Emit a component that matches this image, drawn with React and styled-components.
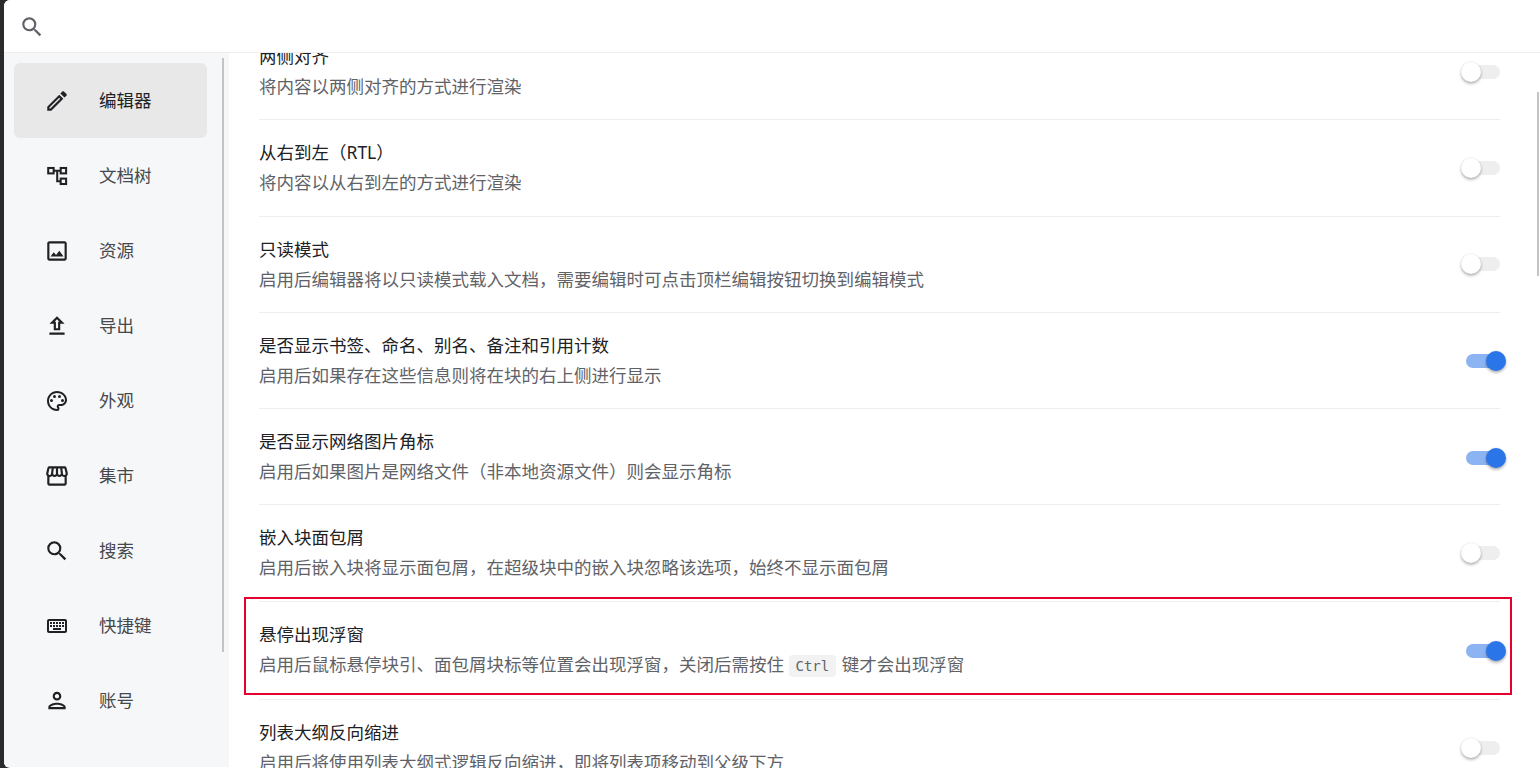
import styled, { createGlobalStyle } from "styled-components";
import {
  MdOutlineEdit,
  MdSearch,
  MdOutlineImage,
  MdOutlinePalette,
  MdOutlineStorefront,
  MdOutlineKeyboard,
  MdOutlinePerson,
  MdOutlineInfo,
} from "react-icons/md";

const Global = createGlobalStyle`
  html, body { margin: 0; height: 100%; background: #2b2b2b; overflow: hidden; }
  body { font-family: "Noto Sans", "Noto Sans CJK SC", sans-serif; }
  #root { height: 100%; }
`;

const Window = styled.div`
  height: 768px;
  margin-left: 4px;
  background: #fff;
  border-radius: 6px 0 0 6px;
  display: flex;
  flex-direction: column;
  overflow: hidden;
`;

const SearchBar = styled.div`
  flex: none;
  height: 50px;
  padding: 2px 0 0 15px;
  border-bottom: 1px solid #eeeeee;
  display: flex;
  align-items: center;
  color: #5f6368;
  background: #fff;
  position: relative;
  z-index: 1;
`;

const Body = styled.div`
  flex: 1;
  display: flex;
  min-height: 0;
`;

const Side = styled.nav`
  width: 225px;
  flex: none;
  background: #f6f7f8;
  padding: 10px 22px 0 10px;
  margin-bottom: 1px;
  box-sizing: border-box;
  display: flex;
  flex-direction: column;
  position: relative;
  overflow: hidden;
`;

const SideThumb = styled.div`
  position: absolute;
  right: 5px;
  top: 5px;
  width: 2px;
  height: 594px;
  background: #c4c4c4;
`;

const NavItem = styled.div`
  flex: none;
  height: 75px;
  width: 193px;
  display: flex;
  align-items: center;
  box-sizing: border-box;
  padding-left: 30px;
  border-radius: 6px;
  font-size: 17.5px;
  color: ${(p) => (p.$active ? "#202124" : "#45484c")};
  background: ${(p) => (p.$active ? "#e8e8e8" : "transparent")};
`;

const NavIcon = styled.span`
  flex: none;
  width: 26px;
  height: 26px;
  display: flex;
  align-items: center;
  justify-content: center;
  color: #202124;
`;

const NavLabel = styled.span`
  margin: -2px 0 0 29px;
`;

const TreeIcon = () => (
  <svg width="26" height="26" viewBox="0 0 24 24" fill="none" stroke="currentColor" strokeWidth="1.9">
    <rect x="3.9" y="4.6" width="5" height="5" />
    <rect x="15.4" y="4.6" width="5" height="5" />
    <rect x="15.4" y="14.4" width="5" height="5" />
    <path d="M8.9 7.1h6.5M12.2 7.1v9.8h3.2" />
  </svg>
);

const UploadIcon = () => (
  <svg width="26" height="26" viewBox="0 0 24 24" fill="currentColor">
    <path d="M9 16h6v-6h4l-7-7-7 7h4v6zm3-10.17L14.17 8H13v6h-2V8H9.83L12 5.83zM5 18h14v2H5z" />
  </svg>
);

const Main = styled.main`
  flex: 1;
  min-width: 0;
  overflow: hidden;
  position: relative;
`;

const MainThumb = styled.div`
  position: absolute;
  right: 1px;
  top: 39px;
  width: 2px;
  height: 184px;
  background: #c4c4c4;
`;

const List = styled.div`
  width: 1241px;
  margin: -28.9px 0 0 30px;
`;

const Row = styled.div`
  height: ${(p) => (p.$tall ? "98px" : "96.25px")};
  box-sizing: border-box;
  border-bottom: 1px solid #eeeeee;
  padding-top: 19px;
  position: relative;
  display: flex;
  align-items: center;
  justify-content: space-between;
  &:last-child { border-bottom: 0; }
`;

const RowText = styled.div`
  align-self: flex-start;
`;

const Title = styled.div`
  font-size: 17.5px;
  line-height: 26px;
  color: #202124;
  margin-bottom: 4px;
`;

const Desc = styled.div`
  font-size: 17.5px;
  line-height: 26px;
  color: #5f6368;
  white-space: nowrap;
`;

const Code = styled.code`
  font-family: "DejaVu Sans Mono", monospace;
  font-size: 14px;
  background: #f2f2f2;
  color: #5f6368;
  border-radius: 4px;
  padding: 3px 6.5px;
  margin: 0 6px 0 5px;
`;

const Switch = styled.span`
  width: 34px;
  height: 14px;
  flex: none;
  border-radius: 7px;
  position: relative;
  background: ${(p) => (p.$on ? "#8cb3f2" : "#eeeeee")};
  margin-top: ${(p) => (p.$on ? "-17px" : "-19px")};
  &::after {
    content: "";
    position: absolute;
    top: -3px;
    left: ${(p) => (p.$on ? "20px" : "-5px")};
    width: 20px;
    height: 20px;
    border-radius: 50%;
    background: ${(p) => (p.$on ? "#2a75e8" : "#fff")};
    box-shadow: 0 2px 3px rgba(0, 0, 0, 0.28), 0 0 2px rgba(0, 0, 0, 0.12);
  }
`;

const Highlight = styled.div`
  position: absolute;
  left: -15px;
  right: -12px;
  top: -4.6px;
  bottom: 3.6px;
  border: 2px solid #e6002d;
  pointer-events: none;
`;

const navs = [
  [<MdOutlineEdit size={26} />, "编辑器", true],
  [<TreeIcon />, "文档树"],
  [<MdOutlineImage size={26} />, "资源"],
  [<UploadIcon />, "导出"],
  [<MdOutlinePalette size={24} />, "外观"],
  [<MdOutlineStorefront size={26} />, "集市"],
  [<MdSearch size={26} />, "搜索"],
  [<MdOutlineKeyboard size={24} />, "快捷键"],
  [<MdOutlinePerson size={29} />, "账号"],
  [<MdOutlineInfo size={18} />, "关于"],
];

const rows = [
  { title: "两侧对齐", desc: "将内容以两侧对齐的方式进行渲染" },
  { title: "从右到左（RTL）", desc: "将内容以从右到左的方式进行渲染" },
  { title: "只读模式", desc: "启用后编辑器将以只读模式载入文档，需要编辑时可点击顶栏编辑按钮切换到编辑模式" },
  { title: "是否显示书签、命名、别名、备注和引用计数", desc: "启用后如果存在这些信息则将在块的右上侧进行显示", on: true },
  { title: "是否显示网络图片角标", desc: "启用后如果图片是网络文件（非本地资源文件）则会显示角标", on: true },
  { title: "嵌入块面包屑", desc: "启用后嵌入块将显示面包屑，在超级块中的嵌入块忽略该选项，始终不显示面包屑" },
  {
    title: "悬停出现浮窗",
    desc: (
      <>
        启用后鼠标悬停块引、面包屑块标等位置会出现浮窗，关闭后需按住<Code>Ctrl</Code>键才会出现浮窗
      </>
    ),
    on: true,
    marked: true,
  },
  { title: "列表大纲反向缩进", desc: "启用后将使用列表大纲式逻辑反向缩进，即将列表项移动到父级下方" },
];

export default function App() {
  return (
    <Window>
      <Global />
      <SearchBar>
        <MdSearch size={26} />
      </SearchBar>
      <Body>
        <Side>
          {navs.map(([icon, label, active]) => (
            <NavItem key={label} $active={active}>
              <NavIcon>{icon}</NavIcon>
              <NavLabel>{label}</NavLabel>
            </NavItem>
          ))}
          <SideThumb />
        </Side>
        <Main>
          <List>
            {rows.map((r) => (
              <Row key={r.title} $tall={r.marked}>
                <RowText>
                  <Title>{r.title}</Title>
                  <Desc>{r.desc}</Desc>
                </RowText>
                <Switch $on={r.on} />
                {r.marked && <Highlight />}
              </Row>
            ))}
          </List>
          <MainThumb />
        </Main>
      </Body>
    </Window>
  );
}
